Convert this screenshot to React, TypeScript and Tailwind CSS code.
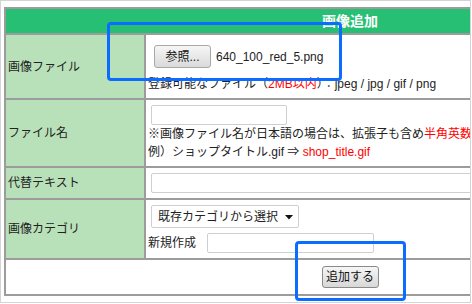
import React from "react";

export default function App() {
  const font = "font-['Liberation_Sans','Noto_Sans_CJK_JP',sans-serif]";
  return (
    <div className={`relative w-[472px] h-[304px] bg-white overflow-hidden text-[12px] text-[#222] ${font}`}>
      <div className="w-[471px] h-[303px] border border-[#d4d4d4] pl-[3px] pt-[6px] overflow-hidden">
        <div className="w-[692px] grid grid-cols-[138px_1fr] grid-rows-[24px_63px_66px_30px_58px_34px] gap-[2px] p-[2px] bg-[#9c9c9c]">
          {/* header */}
          <div className="col-span-2 bg-[#26bf73] flex items-center justify-center text-white font-bold text-[14px] leading-none">
            画像追加
          </div>

          {/* row 1 */}
          <div className="bg-[#b9e1b9] flex items-center pl-[2px]">画像ファイル</div>
          <div className="bg-white pl-[2px] flex flex-col">
            <div className="flex items-center mt-[10px]">
              <button className="ml-[6px] h-[23px] w-[57px] rounded-[3px] border border-[#a8a8a8] bg-gradient-to-b from-[#f6f6f6] to-[#dadada] text-[12px] leading-none text-[#111]">
                参照...
              </button>
              <span className="ml-[5px] leading-none">640_100_red_5.png</span>
            </div>
            <div className="mt-[7px] leading-[18px] whitespace-nowrap">
              登録可能なファイル（<span className="text-[#ff0000]">2MB以内</span>）：jpeg / jpg / gif / png
            </div>
          </div>

          {/* row 2 */}
          <div className="bg-[#b9e1b9] flex items-center pl-[2px]">ファイル名</div>
          <div className="bg-white pl-[2px] flex flex-col">
            <div className="ml-[3px] mt-[5px] h-[20px] w-[136px] border border-[#cfcfcf] rounded-[2px] bg-white" />
            <div className="leading-[18px] whitespace-nowrap">
              ※画像ファイル名が日本語の場合は、拡張子も含め<span className="text-[#ff0000]">半角英数字</span>で入力してください。
            </div>
            <div className="leading-[18px] whitespace-nowrap">
              例）ショップタイトル.gif ⇒ <span className="text-[#ff0000]">shop_title.gif</span>
            </div>
          </div>

          {/* row 3 */}
          <div className="bg-[#b9e1b9] flex items-center pl-[2px]">代替テキスト</div>
          <div className="bg-white pl-[2px] flex flex-col">
            <div className="ml-[3px] mt-[5px] h-[20px] w-[420px] border border-[#cfcfcf] rounded-[2px] bg-white" />
          </div>

          {/* row 4 */}
          <div className="bg-[#b9e1b9] flex items-center pl-[2px]">画像カテゴリ</div>
          <div className="bg-white pl-[2px] flex flex-col">
            <div className="ml-[3px] mt-[5px] h-[23px] w-[148px] border border-[#cfcfcf] rounded-[2px] bg-white flex items-center pl-[6px] pr-[5px]">
              <span className="leading-none flex-1">既存カテゴリから選択</span>
              <svg width="8" height="5" viewBox="0 0 8 5" className="mt-[1px]">
                <path d="M0 0 H8 L4 4.5 Z" fill="#111" />
              </svg>
            </div>
            <div className="flex items-center mt-[5px]">
              <span className="leading-none">新規作成</span>
              <div className="ml-[11px] h-[20px] w-[167px] border border-[#cfcfcf] rounded-[2px] bg-white" />
            </div>
          </div>

          {/* row 5 */}
          <div className="col-span-2 bg-white flex items-center justify-center">
            <button className="h-[22px] w-[57px] rounded-[3px] border border-[#8a8a8a] bg-gradient-to-b from-[#f6f6f6] to-[#d8d8d8] text-[12px] leading-none text-[#111]">
              追加する
            </button>
          </div>
        </div>
      </div>

      {/* highlight overlays */}
      <div className="absolute left-[107px] top-[22px] w-[235px] h-[59px] border-[3px] border-[#0b6cff] rounded-[4px]" />
      <div className="absolute left-[295px] top-[241px] w-[111px] h-[60px] border-[3px] border-[#0b6cff] rounded-[4px]" />
    </div>
  );
}
